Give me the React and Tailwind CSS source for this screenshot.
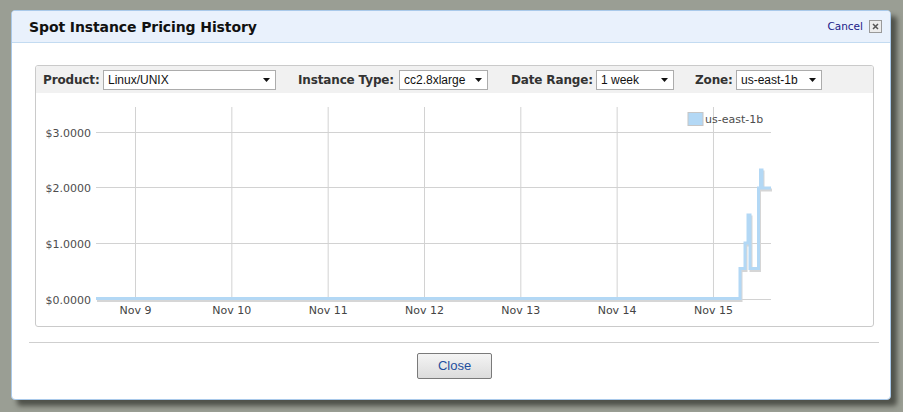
import React from 'react';

const gridY = [39.5, 94.5, 150.5, 206.5];
const yLabels = ['$3.0000', '$2.0000', '$1.0000', '$0.0000'];
const days = ['Nov 9', 'Nov 10', 'Nov 11', 'Nov 12', 'Nov 13', 'Nov 14', 'Nov 15'];
const dayX = days.map((_, i) => 99.5 + i * 96.33);

// price steps, in chart pixels
const pricePath = 'M60,205.5 H704 V175.5 H709 V150 H712 V122 H714 V175.5 H722.5 V95 H724.5 V77 H726 V95 H735';

const Select = ({ value, width }) => (
  <div
    className="h-[20px] bg-white border border-[#acacac] flex items-center justify-between pl-[4px] pr-[5px] text-[12px] text-[#111] font-['Liberation_Sans',Arial,sans-serif]"
    style={{ width }}
  >
    <span>{value}</span>
    <svg width="7" height="4" viewBox="0 0 7 4">
      <path d="M0 0H7L3.5 4Z" fill="#111" />
    </svg>
  </div>
);

const Field = ({ label, labelWidth, value, width }) => (
  <div className="flex items-center">
    <span
      className="font-bold text-[12px] tracking-[-0.15px] text-[#333] whitespace-nowrap"
      style={{ width: labelWidth }}
    >
      {label}
    </span>
    <Select value={value} width={width} />
  </div>
);

const Chart = () => (
  <svg width="837" height="233" className="block font-['DejaVu_Sans',Verdana,sans-serif]">
    {dayX.map((x) => (
      <line key={x} x1={x} x2={x} y1="14" y2="206" stroke="#d2d2d2" strokeWidth="1" />
    ))}
    {gridY.map((y) => (
      <line key={y} x1="60" x2="735" y1={y} y2={y} stroke="#d2d2d2" strokeWidth="1" />
    ))}
    {gridY.map((y, i) => (
      <text key={y} x="55" y={y + 4} textAnchor="end" fontSize="11" fill="#4d4d4d">
        {yLabels[i]}
      </text>
    ))}
    {dayX.map((x, i) => (
      <text key={i} x={x} y="221" textAnchor="middle" fontSize="11" fill="#444">
        {days[i]}
      </text>
    ))}
    <path d={pricePath} transform="translate(1,2)" fill="none" stroke="#d6d6d6" strokeWidth="3" />
    <path d={pricePath} fill="none" stroke="#b3d8f5" strokeWidth="3" />
    <rect x="652" y="19.5" width="15" height="13" fill="#b3d8f5" stroke="#c6c6c6" />
    <text x="669" y="30" fontSize="11" fill="#4d4d4d">us-east-1b</text>
  </svg>
);

export default function App() {
  return (
    <div className="w-[903px] h-[412px] bg-[#9a9e94] overflow-hidden pt-[10px] pl-[11px] font-['DejaVu_Sans',Verdana,sans-serif]">
      <div className="w-[880px] h-[390px] bg-white border border-[#a9c9ea] rounded-[4px] shadow-[6px_6px_5px_rgba(40,42,36,0.65)] flex flex-col overflow-hidden">
        {/* header */}
        <div className="h-[32px] shrink-0 bg-[#e9f1fc] border-b border-[#c3dbf1] flex items-center justify-between pl-[17px] pr-[8px]">
          <h1 className="font-bold text-[14px] tracking-[-0.1px] text-[#111] pt-[2px]">
            Spot Instance Pricing History
          </h1>
          <div className="flex items-center gap-[6px]">
            <span className="text-[10.5px] text-[#1a1a88]">Cancel</span>
            <div className="w-[13px] h-[13px] border border-[#9a9a9a] bg-[#ececec] flex items-center justify-center">
              <svg width="7" height="7" viewBox="0 0 7 7">
                <path d="M1 1L6 6M6 1L1 6" stroke="#555" strokeWidth="1.5" />
              </svg>
            </div>
          </div>
        </div>

        {/* chart panel */}
        <div className="mt-[22px] ml-[23px] w-[839px] h-[262px] border border-[#cacaca] rounded-[3px] overflow-hidden">
          <div className="h-[27px] bg-[#f1f1f1] flex items-center pl-[7px]">
            <Field label="Product:" labelWidth={60} value="Linux/UNIX" width={173} />
            <div className="w-[22px]" />
            <Field label="Instance Type:" labelWidth={101} value="cc2.8xlarge" width={89} />
            <div className="w-[23px]" />
            <Field label="Date Range:" labelWidth={85} value="1 week" width={78} />
            <div className="w-[21px]" />
            <Field label="Zone:" labelWidth={41} value="us-east-1b" width={86} />
          </div>
          <Chart />
        </div>

        <div className="mt-[15px] ml-[17px] mr-[11px] h-px bg-[#cfcfcf]" />

        <div className="flex justify-center mt-[10px] pl-[7px]">
          <button className="w-[75px] h-[26px] border border-[#7a7a7a] rounded-[2px] bg-gradient-to-b from-[#f4f4f4] to-[#dcdcdc] text-[13px] text-[#1f4f9e] font-['Liberation_Sans',Arial,sans-serif]">
            Close
          </button>
        </div>
      </div>
    </div>
  );
}
